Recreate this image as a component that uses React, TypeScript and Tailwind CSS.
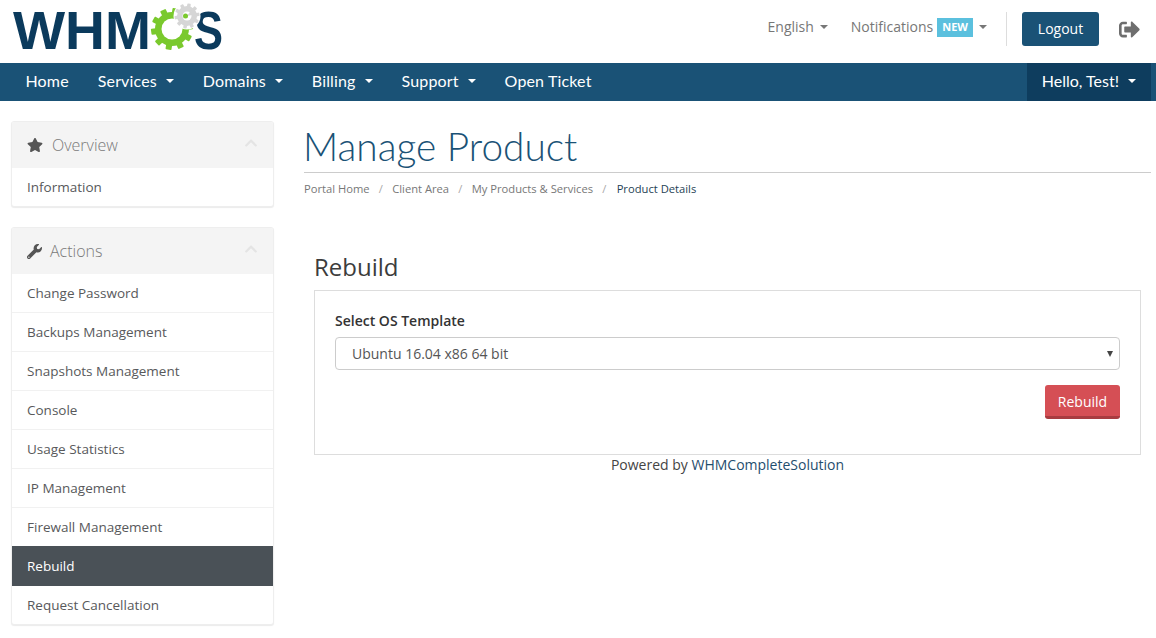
import React from "react";
import { FaStar, FaWrench, FaChevronUp, FaSignOutAlt } from "react-icons/fa";

const Caret = ({ className }: { className: string }) => (
  <span className={`inline-block w-0 h-0 border-x-4 border-x-transparent border-t-4 ${className}`} />
);

const Gear = ({ cx, cy, r, hole, teeth, color, tw, tl }: { cx: number; cy: number; r: number; hole: number; teeth: number; color: string; tw: number; tl: number }) => (
  <g>
    {Array.from({ length: teeth }).map((_, i) => (
      <rect
        key={i}
        x={cx - tw / 2}
        y={cy - r - tl}
        width={tw}
        height={tl + 2}
        rx={0.8}
        fill={color}
        transform={`rotate(${(i * 360) / teeth + 10} ${cx} ${cy})`}
      />
    ))}
    <circle cx={cx} cy={cy} r={r} fill={color} />
    <circle cx={cx} cy={cy} r={hole} fill="#fff" />
  </g>
);

const Logo = () => (
  <svg width="240" height="63" viewBox="0 0 240 63" className="block shrink-0">
    <text x="0" y="49" fontFamily="'Liberation Sans', sans-serif" fontWeight="700" fontSize="54" fill="#0b3a5c" textLength="138" lengthAdjust="spacingAndGlyphs">WHM</text>
    <text x="181" y="49" fontFamily="'Liberation Sans', sans-serif" fontWeight="700" fontSize="54" fill="#0b3a5c" textLength="29" lengthAdjust="spacingAndGlyphs">S</text>
    <Gear cx={159} cy={29} r={17} hole={10.5} teeth={10} color="#7ac92d" tw={6} tl={4} />
    <circle cx={174} cy={16} r={13.5} fill="#fff" />
    <Gear cx={174} cy={16} r={10} hole={4.5} teeth={10} color="#d6d6d6" tw={3.5} tl={2.5} />
    <path d="M174 16 L180 8 L184 14 Z" fill="#d6d6d6" />
    <circle cx={172.5} cy={16} r={2.5} fill="#7ac92d" />
  </svg>
);

const NavItem = ({ label, caret = true, tight = false }: { label: string; caret?: boolean; tight?: boolean }) => (
  <a className={`flex items-center gap-[9px] pb-[2px] h-full text-white text-[16px] font-['Lato',sans-serif] ${tight ? "px-[15px]" : "px-[14.5px] tracking-[0.15px]"}`}>
    {label}
    {caret && <Caret className="border-t-white" />}
  </a>
);

const Row = ({ label, active }: { label: string; active?: boolean }) => (
  <div
    className={
      active
        ? "h-10 -mt-px flex items-center px-[15px] bg-[#4a5157] text-white text-[13.5px]"
        : "h-[39px] last:h-[38px] flex items-center px-[15px] border-b border-[#f1f1f1] last:border-b-0 text-[#58595b] text-[13.5px]"
    }
  >
    {label}
  </div>
);

const Panel = ({ title, icon, rows, gap }: { title: string; icon: React.ReactNode; rows: React.ReactNode; gap: string }) => (
  <div className="rounded-[3px] border border-[#eeeeee] shadow-[0_1px_1px_rgba(0,0,0,0.08)] bg-white overflow-hidden">
    <div className="h-[46px] bg-[#f4f4f4] flex items-center px-[15px]">
      <span className={`flex items-center ${gap} text-[16px]`}>
        {icon}
        <span className="text-[#7a7a7a] font-light">{title}</span>
      </span>
      <FaChevronUp className="ml-auto mb-1 text-[#e4e4e4] text-[14px]" />
    </div>
    {rows}
  </div>
);

export default function App() {
  return (
    <div className="w-[1156px] h-[638px] overflow-hidden bg-white font-['Open_Sans',sans-serif] text-[#58595b]">
      <header className="h-[63px] flex items-center pl-[13px] pr-[16px]">
        <Logo />
        <div className="ml-auto mb-[5px] flex items-center text-[#777777] text-sm">
          <span className="flex items-center gap-[6px] mb-[4px]">English <Caret className="border-t-[#777777]" /></span>
          <span className="flex items-center ml-[23px] mb-[4px]">
            Notifications
            <span className="ml-1 px-[5px] h-[19px] flex items-center bg-[#5bc0de] text-white text-[11px] font-bold">NEW</span>
            <Caret className="ml-[6px] border-t-[#777777]" />
          </span>
          <span className="w-px h-[34px] bg-[#dddddd] ml-[19px]" />
          <button className="ml-[15px] w-[77px] h-[34px] rounded-[3px] bg-[#1a5276] text-white text-sm">Logout</button>
          <FaSignOutAlt className="ml-[20px] text-[#6e6e6e] text-[21px]" />
        </div>
      </header>

      <nav className="h-[38px] bg-[#1a5276] flex pl-[11px] pr-[5px]">
        <NavItem label="Home" caret={false} />
        <NavItem label="Services" />
        <NavItem label="Domains" />
        <NavItem label="Billing" />
        <NavItem label="Support" />
        <NavItem label="Open Ticket" caret={false} />
        <div className="ml-auto bg-[#0e3d5e]">
          <NavItem label="Hello, Test!" tight />
        </div>
      </nav>

      <div className="flex pl-[11px] pr-[5px] pt-5">
        <aside className="w-[263px] flex flex-col gap-5 shrink-0">
          <Panel
            title="Overview"
            gap="gap-[9px]"
            icon={<FaStar className="text-[#555555] text-[16px]" />}
            rows={<Row label="Information" />}
          />
          <Panel
            title="Actions"
            gap="gap-2"
            icon={<FaWrench className="text-[#555555] text-[15px]" />}
            rows={
              <>
                <Row label="Change Password" />
                <Row label="Backups Management" />
                <Row label="Snapshots Management" />
                <Row label="Console" />
                <Row label="Usage Statistics" />
                <Row label="IP Management" />
                <Row label="Firewall Management" />
                <Row label="Rebuild" active />
                <Row label="Request Cancellation" />
              </>
            }
          />
        </aside>

        <main className="ml-[30px] flex-1">
          <h1 className="h-[52px] border-b border-[#cccccc] text-[38.8px] leading-[51px] text-[#1a5276] font-['Lato',sans-serif] font-light -indent-px">Manage Product</h1>
          <div className="mt-[8px] flex items-center text-[11.2px] text-[#777777] leading-[15px]">
            <span>Portal Home</span>
            <span className="mx-[9.25px] text-[#aaaaaa]">/</span>
            <span>Client Area</span>
            <span className="mx-[9.25px] text-[#aaaaaa]">/</span>
            <span>My Products &amp; Services</span>
            <span className="mx-[9.25px] text-[#aaaaaa]">/</span>
            <span className="ml-px text-[#1f3f55]">Product Details</span>
          </div>
          <section className="mx-[10px] mt-[54px]">
            <h2 className="text-2xl leading-[34px] text-[#3c3c3c] font-normal">Rebuild</h2>
            <div className="mt-[6px] h-[165px] border border-[#dddddd] px-5 pt-[20px]">
              <label className="block text-sm leading-5 font-semibold text-[#333333]">Select OS Template</label>
              <div className="mt-[6px] h-[33px] rounded-[4px] border border-[#cccccc] flex items-center pl-4 pr-[6px] text-sm text-[#555555]">
                Ubuntu 16.04 x86 64 bit
                <span className="ml-auto inline-block w-0 h-0 border-x-[3.5px] border-x-transparent border-t-[6px] border-t-[#444444]" />
              </div>
              <div className="flex justify-end mt-[15px]">
                <button className="w-[75px] h-[34px] pt-[2px] rounded-[3px] bg-[#d54f55] border-b-[3px] border-[#a83c40] text-white text-sm">Rebuild</button>
              </div>
            </div>
            <p className="text-center text-sm leading-5 mt-0 text-[#444444]">
              Powered by <span className="text-[#1f4e6e]">WHMCompleteSolution</span>
            </p>
          </section>
        </main>
      </div>
    </div>
  );
}
